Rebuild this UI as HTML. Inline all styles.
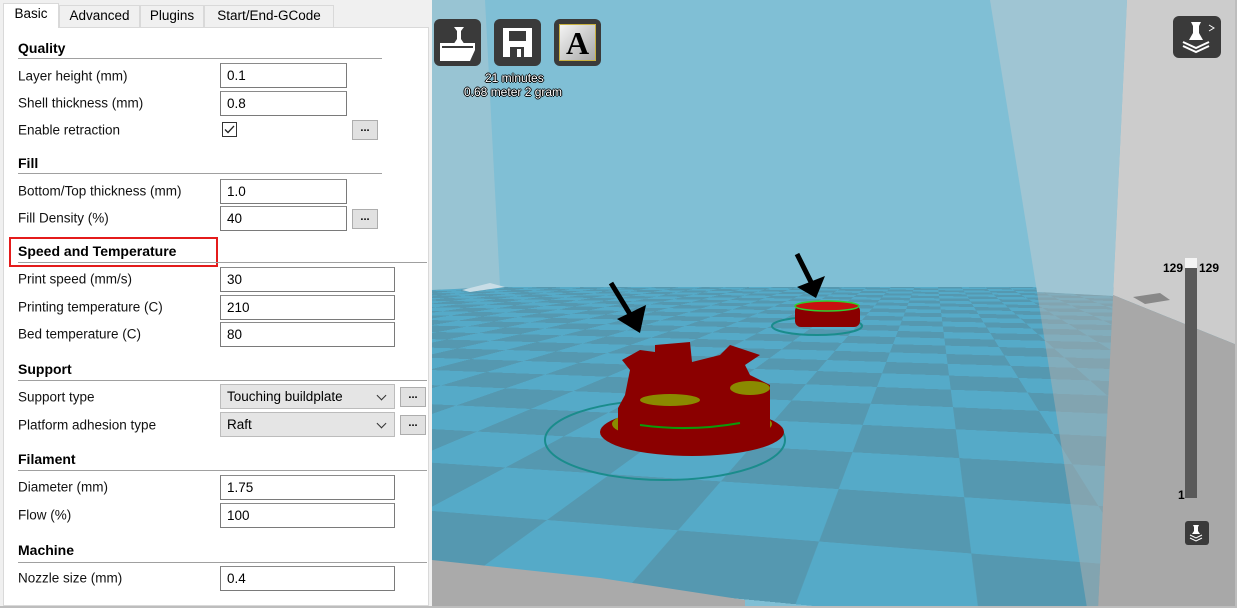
<!DOCTYPE html>
<html><head><meta charset="utf-8"><style>
*{margin:0;padding:0;box-sizing:border-box}
html,body{width:1237px;height:608px;overflow:hidden}
body{background:#fff;font-family:"Liberation Sans","DejaVu Sans",sans-serif;position:relative}
.a{position:absolute}
.tab{position:absolute;top:5px;height:22px;border:1px solid #d9d9d9;border-bottom:none;background:#f0f0f0;font-size:13.5px;line-height:20px;text-align:center;color:#000}
.lbl{position:absolute;left:18px;font-size:13.5px;color:#111;transform:translateY(-50%)}
.hd{position:absolute;left:18px;font-size:14px;font-weight:bold;color:#000;transform:translateY(-50%)}
.ln{position:absolute;left:18px;height:1px;background:#a0a0a0}
.in{position:absolute;left:220px;height:25px;border:1px solid #7a7a7a;border-top-color:#8a8a8a;background:#fff;font-size:13.5px;line-height:23px;padding-left:6px}
.sel{position:absolute;left:220px;width:175px;height:25px;border:1px solid #bcbcbc;background:#e5e5e5;font-size:13.5px;line-height:23px;padding-left:6px}
.sel:after{content:"";position:absolute;right:9px;top:7px;width:6px;height:6px;border-right:1px solid #333;border-bottom:1px solid #333;transform:rotate(45deg)}
.btn{position:absolute;width:26px;height:20px;border:1px solid #adadad;background:#e1e1e1;font-size:11px;line-height:14px;text-align:center;font-weight:bold}
.ic{position:absolute;width:47px;height:47px;border-radius:6px;background:#3a3a3a}
.ot{position:absolute;color:#fff;font-size:12px;text-shadow:-1px 0 #000,1px 0 #000,0 -1px #000,0 1px #000;white-space:nowrap}
</style></head><body>
<div class="a" style="left:0;top:0;width:432px;height:608px;background:#f0f0f0"></div>
<div class="a" style="left:3px;top:27px;width:426px;height:579px;background:#fff;border:1px solid #d9d9d9"></div>
<div class="tab" style="left:3px;top:3px;width:56px;height:25px;background:#fff">Basic</div>
<div class="tab" style="left:59px;width:81px">Advanced</div>
<div class="tab" style="left:140px;width:64px">Plugins</div>
<div class="tab" style="left:204px;width:130px">Start/End-GCode</div>

<div class="hd" style="top:48px">Quality</div><div class="ln" style="top:58px;width:364px"></div>
<div class="lbl" style="top:76px">Layer height (mm)</div><div class="in" style="top:63px;width:127px">0.1</div>
<div class="lbl" style="top:103px">Shell thickness (mm)</div><div class="in" style="top:91px;width:127px">0.8</div>
<div class="lbl" style="top:130px">Enable retraction</div>
<div class="a" style="left:222px;top:122px;width:15px;height:15px;border:1px solid #333;background:#fff"><svg width="13" height="13" style="position:absolute;left:0;top:0"><path d="M2 6.5 L5 9.5 L11 3" stroke="#222" stroke-width="1.3" fill="none"/></svg></div>
<div class="btn" style="left:352px;top:120px">...</div>

<div class="hd" style="top:163px">Fill</div><div class="ln" style="top:173px;width:364px"></div>
<div class="lbl" style="top:191px">Bottom/Top thickness (mm)</div><div class="in" style="top:179px;width:127px">1.0</div>
<div class="lbl" style="top:218px">Fill Density (%)</div><div class="in" style="top:206px;width:127px">40</div>
<div class="btn" style="left:352px;top:209px">...</div>

<div class="a" style="left:9px;top:237px;width:209px;height:30px;border:2px solid #e41b1b"></div>
<div class="hd" style="top:251px">Speed and Temperature</div><div class="ln" style="top:262px;width:409px"></div>
<div class="lbl" style="top:279px">Print speed (mm/s)</div><div class="in" style="top:267px;width:175px">30</div>
<div class="lbl" style="top:307px">Printing temperature (C)</div><div class="in" style="top:295px;width:175px">210</div>
<div class="lbl" style="top:334px">Bed temperature (C)</div><div class="in" style="top:322px;width:175px">80</div>

<div class="hd" style="top:369px">Support</div><div class="ln" style="top:380px;width:409px"></div>
<div class="lbl" style="top:397px">Support type</div><div class="sel" style="top:384px">Touching buildplate</div>
<div class="btn" style="left:400px;top:387px">...</div>
<div class="lbl" style="top:425px">Platform adhesion type</div><div class="sel" style="top:412px">Raft</div>
<div class="btn" style="left:400px;top:415px">...</div>

<div class="hd" style="top:459px">Filament</div><div class="ln" style="top:470px;width:409px"></div>
<div class="lbl" style="top:487px">Diameter (mm)</div><div class="in" style="top:475px;width:175px">1.75</div>
<div class="lbl" style="top:515px">Flow (%)</div><div class="in" style="top:503px;width:175px">100</div>
<div class="hd" style="top:550px">Machine</div><div class="ln" style="top:562px;width:409px"></div>
<div class="lbl" style="top:578px">Nozzle size (mm)</div><div class="in" style="top:566px;width:175px">0.4</div>

<div class="a" style="left:432px;top:0;width:805px;height:608px;background:#80bfd5;overflow:hidden">
 <div class="a" style="left:0;top:287px;width:805px;height:321px;overflow:hidden;perspective:800px;perspective-origin:330px -47px">
  <div class="a" style="left:-9597px;top:-5679px;width:20000px;height:6000px;transform-origin:50% 100%;transform:rotateX(90deg) rotateZ(12deg);background-color:#55aac8;background-image:conic-gradient(#5598b0 0 25%,transparent 0 50%,#5598b0 0 75%,transparent 0);background-size:360px 420px;background-position:60px 158px"></div>
 </div>
</div>
<svg class="a" style="left:0;top:0" width="1237" height="608">
 <polygon points="432,0 485,0 500,287 432,290" fill="#98c4d3"/>
 <polygon points="432,560 600,578 745,600 745,608 432,608" fill="#aaaaaa"/>
 <polygon points="1127,0 1237,0 1237,345 1113,295" fill="#cccccc"/>
 <polygon points="1113,295 1237,345 1237,608 1098,608" fill="#a8a8a8"/>
 <polygon points="990,0 1127,0 1113,296 1037,292" fill="#9fc5d3"/>
 <polygon points="1037,292 1113,296 1098,608 1087,608" fill="rgba(175,175,175,0.5)"/>
 <polygon points="462,290 490,283 505,287 470,292" fill="#c8dde6"/>
 <polygon points="1133,297 1160,293 1170,300 1145,304" fill="#888"/>
 <ellipse cx="665" cy="440" rx="120" ry="40" fill="none" stroke="#1a8c8c" stroke-width="2"/>
 <ellipse cx="692" cy="432" rx="92" ry="24" fill="#8b0000"/>
 <ellipse cx="692" cy="424" rx="80" ry="17" fill="#8a8a00"/>
 <ellipse cx="690" cy="420" rx="72" ry="14" fill="#0a9a0a"/>
 <path d="M618,440 L618,408 L625,395 L630,370 L622,360 L640,350 L655,352 L655,345 L690,342 L692,362 L720,355 L730,345 L760,355 L745,365 L750,375 L770,385 L770,430 Q720,450 618,440 Z" fill="#8b0000"/>
 <ellipse cx="670" cy="400" rx="30" ry="6" fill="#8a8a00"/>
 <ellipse cx="750" cy="388" rx="20" ry="7" fill="#8a8a00"/>
 <path d="M640 425 Q690 432 740 423" stroke="#0a9a0a" stroke-width="2" fill="none"/>
 <ellipse cx="817" cy="326" rx="45" ry="9" fill="none" stroke="#1a8c8c" stroke-width="2"/>
 <rect x="795" y="305" width="65" height="22" rx="6" fill="#8b0000"/>
 <ellipse cx="827" cy="306" rx="32" ry="5" fill="#c81010" stroke="#30d030" stroke-width="1.5"/>
 <path d="M611,283 L636,324" stroke="#000" stroke-width="5"/>
 <polygon points="617,319 646,305 640,333" fill="#000"/>
 <path d="M797,254 L815,290" stroke="#000" stroke-width="5"/>
 <polygon points="797,287 825,276 816,298" fill="#000"/>
</svg>

<div class="ic" style="left:434px;top:19px"><svg width="47" height="47"><path d="M20 8 H30 L27 12 L27 20 L31 26 H19 L23 20 L23 12 Z" fill="#fff"/><path d="M6 24 H41 V31 L36 42 H6 Z" fill="#fff"/><path d="M8 28 H39" stroke="#3a3a3a" stroke-width="2"/></svg></div>
<div class="ic" style="left:494px;top:19px"><svg width="47" height="47"><path d="M9 9 H38 V38 H9 Z" fill="#fff"/><rect x="15" y="12" width="17" height="10" fill="#3a3a3a"/><rect x="16" y="28" width="14" height="10" fill="#3a3a3a"/><rect x="23" y="30" width="4" height="8" fill="#fff"/></svg></div>
<div class="ic" style="left:554px;top:19px"><div class="a" style="left:5px;top:5px;width:37px;height:37px;border:1px solid #c8b040;background:linear-gradient(135deg,#f4f4f4,#a8a8a8);font-family:'Liberation Serif',serif;font-weight:bold;font-size:32px;line-height:36px;text-align:center;color:#000">A</div></div>
<div class="ot" style="left:485px;top:71px">21 minutes</div>
<div class="ot" style="left:464px;top:85px">0.68 meter 2 gram</div>

<div class="ic" style="left:1173px;top:16px;width:48px;height:42px"><svg width="48" height="42"><path d="M18 6 H28 L26 10 L26 17 L30 24 H16 L20 17 L20 10 Z" fill="#fff"/><path d="M10 26 L23 32 L36 26 M10 30 L23 36 L36 30" stroke="#fff" stroke-width="2" fill="none"/><path d="M36 9 L41 12 L36 15" stroke="#fff" fill="none"/></svg></div>
<div class="a" style="left:1185px;top:266px;width:12px;height:232px;background:#595959"></div>
<div class="a" style="left:1185px;top:258px;width:12px;height:10px;background:#f4f4f4"></div>
<div class="a" style="left:1163px;top:261px;font-size:12px;font-weight:bold">129</div>
<div class="a" style="left:1199px;top:261px;font-size:12px;font-weight:bold">129</div>
<div class="a" style="left:1178px;top:488px;font-size:12px;font-weight:bold">1</div>
<div class="ic" style="left:1185px;top:521px;width:24px;height:24px;border-radius:3px"><svg width="24" height="24"><path d="M8 4 H14 L13 6 V10 L15 13 H7 L9 10 V6 Z" fill="#fff"/><path d="M5 14 L11 17 L17 14 M5 17 L11 20 L17 17" stroke="#fff" fill="none"/></svg></div>
<div class="a" style="left:0;top:606px;width:1237px;height:2px;background:#bdbdbd"></div>
<div class="a" style="left:1235px;top:0;width:2px;height:608px;background:#bdbdbd"></div>
</body></html>
